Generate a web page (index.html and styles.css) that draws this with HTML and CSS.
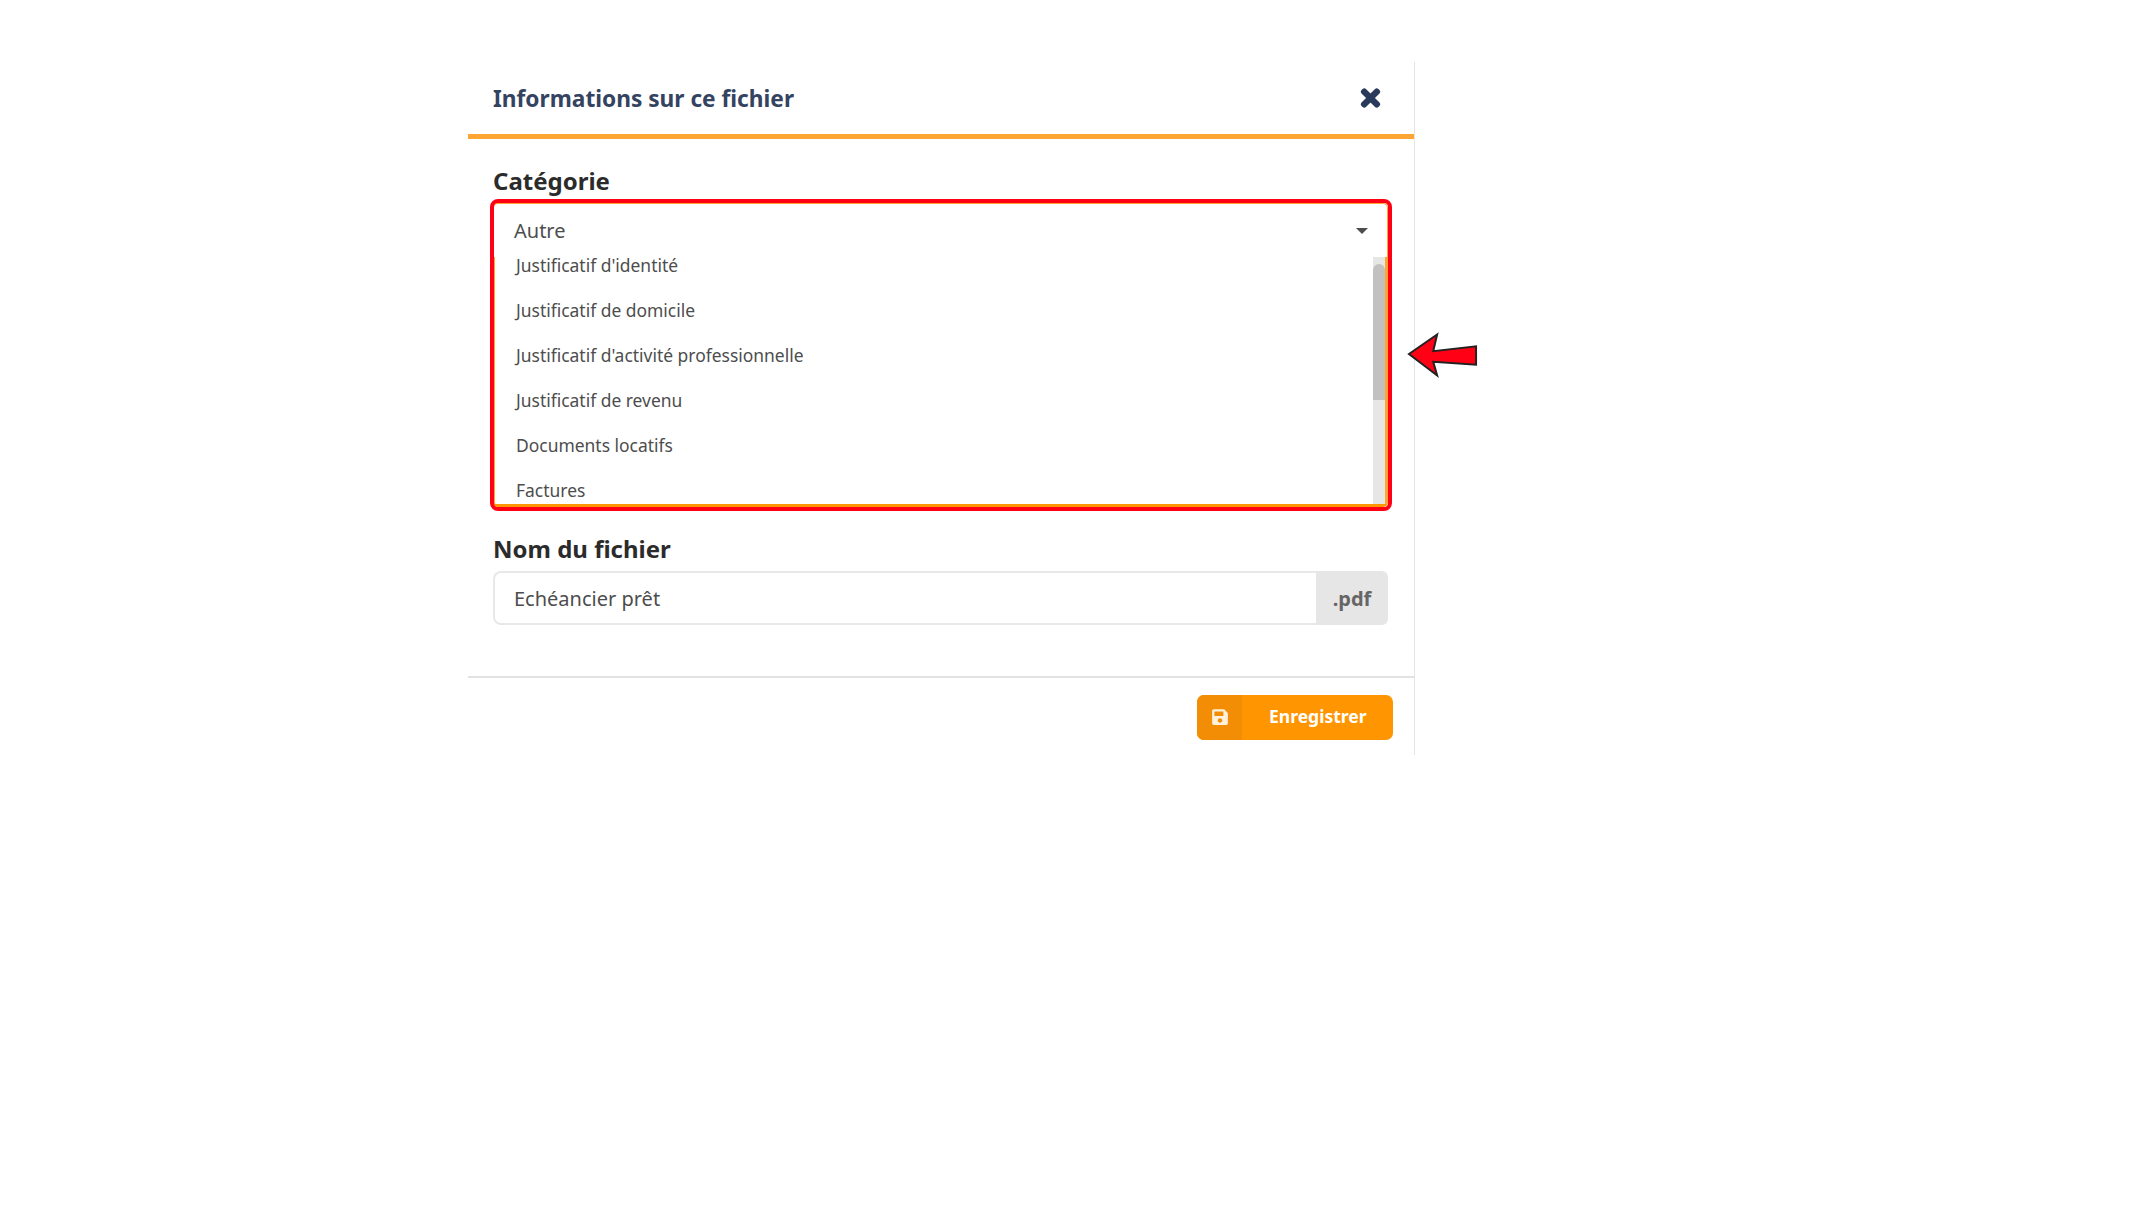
FILE: index.html
```html
<!DOCTYPE html>
<html lang="fr">
<head>
<meta charset="utf-8">
<title>Informations sur ce fichier</title>
<link rel="stylesheet" href="styles.css">
</head>
<body>
<section class="panel">
  <header class="panel-head">
    <h1 class="panel-title">Informations sur ce fichier</h1>
    <svg class="close-icon" viewBox="0 0 352 512" aria-hidden="true"><path d="M242.72 256l100.07-100.07c12.28-12.28 12.28-32.19 0-44.48l-22.24-22.24c-12.28-12.28-32.19-12.28-44.48 0L176 189.28 75.93 89.21c-12.28-12.28-32.19-12.28-44.48 0L9.21 111.45c-12.28 12.28-12.28 32.19 0 44.48L109.28 256 9.21 356.07c-12.28 12.28-12.28 32.19 0 44.48l22.24 22.24c12.28 12.28 32.2 12.28 44.48 0L176 322.72l100.07 100.07c12.28 12.28 32.2 12.28 44.48 0l22.24-22.24c12.28-12.28 12.28-32.19 0-44.48L242.72 256z"/></svg>
  </header>
  <div class="panel-body">
    <label class="field-label field-label-first">Catégorie</label>
    <div class="select">
      <div class="select-value">
        <span>Autre</span>
        <i class="caret"></i>
      </div>
      <div class="select-list">
        <ul class="options">
          <li>Justificatif d'identité</li>
          <li>Justificatif de domicile</li>
          <li>Justificatif d'activité professionnelle</li>
          <li>Justificatif de revenu</li>
          <li>Documents locatifs</li>
          <li>Factures</li>
        </ul>
        <div class="scrollbar"><div class="thumb"></div></div>
      </div>
      <div class="annotation-box"></div>
    </div>
    <label class="field-label field-label-second">Nom du fichier</label>
    <div class="input-group">
      <div class="input">Echéancier prêt</div>
      <div class="addon">.pdf</div>
    </div>
  </div>
  <footer class="panel-foot">
    <button class="save-btn" type="button">
      <span class="save-icon"><svg viewBox="0 0 448 512" aria-hidden="true"><path d="M433.941 129.941l-83.882-83.882A48 48 0 0 0 316.118 32H48C21.49 32 0 53.49 0 80v352c0 26.51 21.49 48 48 48h352c26.51 0 48-21.49 48-48V163.882a48 48 0 0 0-14.059-33.941zM224 416c-35.346 0-64-28.654-64-64 0-35.346 28.654-64 64-64s64 28.654 64 64c0 35.346-28.654 64-64 64zm96-304.52V212c0 6.627-5.373 12-12 12H76c-6.627 0-12-5.373-12-12V108c0-6.627 5.373-12 12-12h228.52c3.183 0 6.235 1.264 8.485 3.515l3.48 3.48A11.996 11.996 0 0 1 320 111.48z"/></svg></span>
      <span class="save-label">Enregistrer</span>
    </button>
  </footer>
  <svg class="arrow" viewBox="0 0 74 46" aria-hidden="true"><path d="M2 22 L31 2 L27 19 L71 14 L71 33 L27 30 L31 44 Z"/></svg>
</section>
</body>
</html>
```

FILE: styles.css
```css
* { box-sizing: border-box; }
html, body { margin: 0; padding: 0; background: #fff; }
body {
  font-family: "Noto Sans", "Open Sans", sans-serif;
  height: 1215px;
  overflow: hidden;
  color: #4d4d4d;
}
.panel {
  position: relative;
  width: 947px;
  height: 693px;
  margin: 62px 0 0 468px;
  border-right: 1px solid #e4e4e4;
}
.panel-head {
  display: flex;
  align-items: center;
  justify-content: space-between;
  height: 77px;
  padding: 0 34px 0 25px;
  border-bottom: 5px solid #ffa533;
}
.panel-title {
  margin: 0;
  font-size: 22.7px;
  font-weight: 700;
  color: #34435f;
}
.close-icon {
  width: 19px;
  height: 26px;
  fill: #2a3a5c;
  stroke: #2a3a5c;
  stroke-width: 30;
  overflow: visible;
}
.panel-body { padding: 0 25px 0 25px; height: 537px; }
.field-label {
  display: block;
  font-size: 24px;
  font-weight: 700;
  line-height: 32px;
  color: #2b2b2b;
}
.field-label-first { padding-top: 26px; height: 64px; }
.field-label-second { padding-top: 26px; height: 64px; }
.select {
  position: relative;
  width: 895px;
  height: 304px;
  border: 1px solid #ffa533;
  border-bottom: 3px solid #ff9500;
  border-radius: 5px;
  display: flex;
  flex-direction: column;
}
.select-value {
  display: flex;
  align-items: center;
  justify-content: space-between;
  height: 53px;
  flex: none;
  padding: 0 19px 0 20px;
  font-size: 20px;
}
.caret {
  width: 0;
  height: 0;
  border-left: 6px solid transparent;
  border-right: 6px solid transparent;
  border-top: 6px solid #4d4d4d;
}
.select-list {
  display: flex;
  flex: 1;
  min-height: 0;
  overflow: hidden;
  border-left: 2px solid #ffa533;
  border-right: 2px solid #ffa533;
  margin: 0 0 0 -1px;
}
.options {
  flex: 1;
  margin: -14px 0 0;
  padding: 0;
  list-style: none;
  font-size: 17.45px;
}
.options li {
  height: 45px;
  line-height: 45px;
  padding-left: 21px;
}
.scrollbar {
  flex: none;
  width: 12px;
  background: #e6e6e6;
  padding-top: 7px;
}
.thumb {
  height: 136px;
  background: #c1c1c1;
  border-radius: 6px 6px 0 0;
}
.annotation-box {
  position: absolute;
  top: -5px;
  left: -4px;
  right: -5px;
  bottom: -7px;
  border: 4px solid #ff0014;
  border-radius: 8px;
  pointer-events: none;
}
.input-group {
  display: flex;
  width: 895px;
  height: 54px;
}
.input {
  flex: 1;
  display: flex;
  align-items: center;
  padding-left: 19px;
  font-size: 20px;
  border: 2px solid #e8e8e8;
  border-right: 0;
  border-radius: 8px 0 0 8px;
}
.addon {
  width: 72px;
  display: flex;
  align-items: center;
  justify-content: center;
  background: #e6e6e6;
  border-radius: 0 6px 6px 0;
  font-size: 20px;
  font-weight: 700;
  color: #666;
}
.panel-foot {
  border-top: 2px solid #e2e2e2;
  height: 79px;
  display: flex;
  justify-content: flex-end;
  padding: 17px 21px 0 0;
}
.save-btn {
  display: flex;
  align-items: stretch;
  width: 196px;
  height: 45px;
  padding: 0;
  border: 0;
  border-radius: 7px;
  background: #ff9500;
  overflow: hidden;
  font-family: inherit;
}
.save-icon {
  width: 45px;
  display: flex;
  align-items: center;
  justify-content: center;
  padding-bottom: 1px;
  background: #f28d05;
}
.save-icon svg { width: 16px; height: 18px; fill: #fff1dc; }
.save-label {
  flex: 1;
  align-self: center;
  text-align: left;
  padding: 0 0 3px 27px;
  font-size: 17.5px;
  font-weight: 700;
  color: #fff;
}
.arrow {
  position: absolute;
  left: 939px;
  top: 270px;
  width: 72px;
  height: 46px;
  fill: #ff0014;
  stroke: #222;
  stroke-width: 2;
}
```
